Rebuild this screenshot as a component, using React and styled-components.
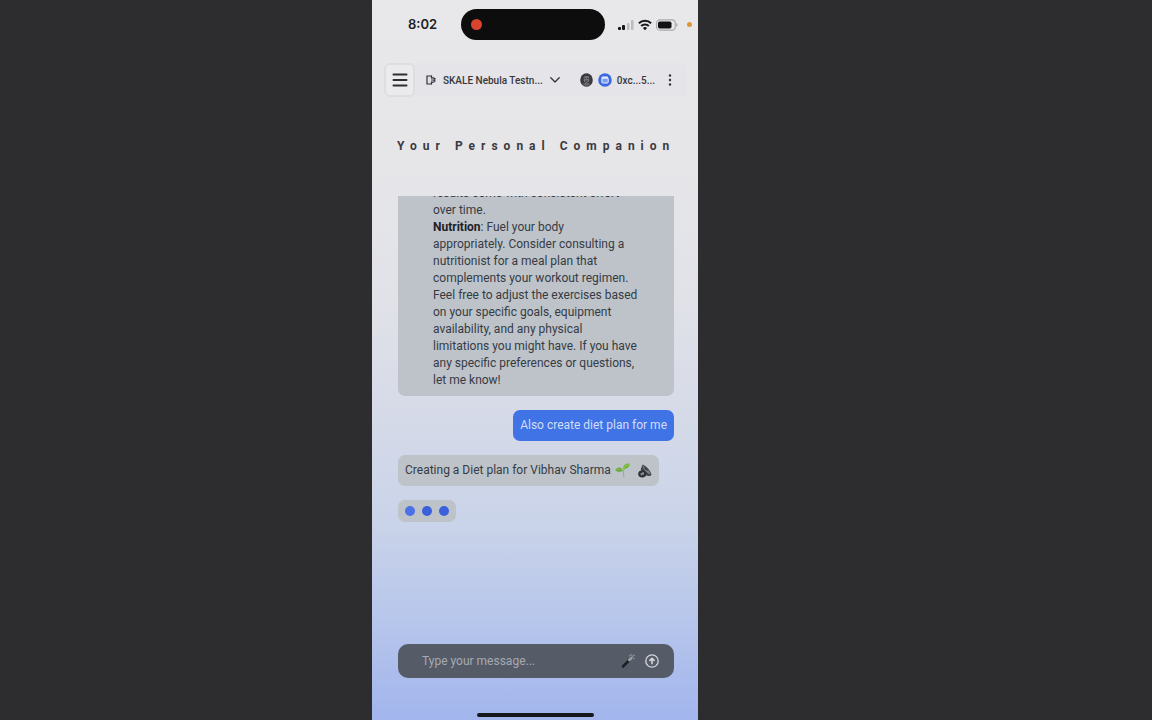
import React, {useState} from 'react';
import styled, {createGlobalStyle} from 'styled-components';

const GlobalStyle = createGlobalStyle`
  * { box-sizing:border-box; }
  body { margin:0; background:#2d2d2f; }
  button, input { font:inherit; color:inherit; border:0; background:none; padding:0; }
  button { cursor:pointer; }
`

const SignalIcon = () => (
    <svg width="16" height="12" viewBox="0 0 16 12">
        <rect x="0" y="8" width="3" height="3" rx="1" fill="#161618"/>
        <rect x="4" y="6" width="3" height="5" rx="1" fill="#161618"/>
        <rect x="9" y="4" width="2.5" height="7" rx="1" fill="#bcbcc0"/>
        <rect x="13" y="1" width="2.5" height="10" rx="1" fill="#bcbcc0"/>
    </svg>
);

const WifiIcon = () => (
    <svg width="14" height="12" viewBox="0 0 14 12" fill="none" stroke="#161618" strokeWidth="2">
        <path d="M.9 4.3a8.7 8.7 0 0 1 12.2 0"/>
        <path d="M3.2 7a5.4 5.4 0 0 1 7.6 0"/>
        <path d="M7 11.3 4.9 9.1a3 3 0 0 1 4.2 0z" fill="#161618" stroke="none"/>
    </svg>
);

const BatteryIcon = () => (
    <svg width="22" height="12" viewBox="0 0 22 12">
        <rect x=".6" y=".9" width="18.6" height="10.2" rx="3.2" fill="none" stroke="#a9a9ad" strokeWidth="1.1"/>
        <rect x="2" y="2.4" width="13.5" height="7.2" rx="1.8" fill="#111113"/>
        <path d="M20.2 4v4c1.8-.7 1.8-3.3 0-4z" fill="#a9a9ad"/>
    </svg>
);

const MenuIcon = () => (
    <svg width="16" height="14" viewBox="0 0 16 14" stroke="#2f2f33" strokeWidth="2" strokeLinecap="round">
        <path d="M1.5 1.5h13M1.5 7h13M1.5 12.5h13"/>
    </svg>
);

const SkaleIcon = () => (
    <svg width="10" height="10" viewBox="0 0 10 10" fill="none" stroke="#333338" strokeWidth="1.2">
        <path d="M5.5 1H1v8h4.5"/>
        <path d="M5.5.5v2.300M5.500 7.200v2.300"/>
        <path d="M4.800 2.900h2.700l1.500 1-1.500 1.100 1.500 1.100-1.500 1.100H4.800M5 5h2.500"/>
    </svg>
);

const ChevronIcon = () => (
    <svg width="10" height="6" viewBox="0 0 10 6" fill="none" stroke="#333338" strokeWidth="1.3" strokeLinecap="round" strokeLinejoin="round">
        <path d="M.8.8 5 5 9.2.8"/>
    </svg>
);

const AvatarIcon = () => (
    <svg width="13" height="14" viewBox="0 0 13 14">
        <ellipse cx="6.5" cy="7" rx="6.3" ry="6.8" fill="#3a3a3d"/>
        <path d="M3.8 4.5C4 2.500 9 2.500 9.2 4.500v3.300c-.2 2.600-5.200 2.600-5.400 0z" fill="#77777a"/>
        <path d="M4.500 5.400h1.400M7.100 5.400h1.400M5.200 8h2.600" stroke="#29292c" strokeWidth=".9"/>
        <path d="M2.500 11c2-1.500 6-1.500 8 0-2 2.300-6 2.300-8 0z" fill="#69696c"/>
    </svg>
);

const WalletIcon = () => (
    <svg width="14" height="14" viewBox="0 0 14 14">
        <circle cx="7" cy="7" r="6.8" fill="#3c69e0"/>
        <rect x="3.8" y="4.8" width="6.4" height="5.2" rx="1" fill="#7da0ee" stroke="#e9effc" strokeWidth="1"/>
        <path d="M3.800 5.500V4.300c0-.5.3-.8.8-.8h4.600c.5 0 .8.300.8.800v1.200z" fill="#e9effc"/>
    </svg>
);

const MoreIcon = () => (
    <svg width="4" height="12" viewBox="0 0 4 12" fill="#333338">
        <circle cx="2" cy="1.5" r="1.2"/>
        <circle cx="2" cy="6" r="1.2"/>
        <circle cx="2" cy="10.5" r="1.2"/>
    </svg>
);

const SeedlingIcon = () => (
    <svg width="15" height="15" viewBox="0 0 15 15">
        <path d="M8.8 14C8.9 11 8.400 8.500 7.400 6.500M8.400 8C9 6 10.500 4.500 12.500 3" fill="none" stroke="#8fae7b" strokeWidth="1"/>
        <path d="M7.800 6.900C5.500 9.800 2 9 .2 7.300 2 4.200 6 3.400 7.800 6.900z" fill="#68a832"/>
        <path d="M8.100 5.800C8 1.800 11 .4 14.800.6 14.700 4 12 6.500 8.100 5.800z" fill="#74b737"/>
        <path d="M1.500 6.900c2-.8 4-.9 5.700-.3M9 5c1-1.700 2.500-2.700 4.500-3.300" stroke="#96cd58" strokeWidth=".7" fill="none"/>
    </svg>
);

const SpeakerIcon = () => (
    <svg width="14" height="14" viewBox="0 0 14 14">
        <path d="M4.2.9C6.400.2 12.300 6 13.500 10.700c-1 1.500-3.500 1.400-5 .7L2.600 6z" fill="#3f4349"/>
        <path d="M4.400 1.200c2.700.8 6.800 5.200 8 9.300-2.800-.8-7.500-5.500-8-9.300z" fill="#858a90"/>
        <path d="M5.500 2c2 .6 4 3 4.600 5-1.500.1-4-2.500-4.600-5z" fill="#35393f"/>
        <ellipse cx="4.200" cy="10" rx="4" ry="3.400" fill="#2d3136"/>
        <path d="M2.200 9.700 5.600 7.800l.6 2.500-3 1.200z" fill="#8d9298"/>
    </svg>
);

const WandIcon = () => (
    <svg width="15" height="16" viewBox="0 0 15 16" fill="none" strokeLinecap="round">
        <path d="M2 13.5 8.500 7" stroke="#1e2024" strokeWidth="2.600"/>
        <path d="M8.300 7.200 10.300 5.200" stroke="#9ca0a7" strokeWidth="2.600"/>
        <path d="M8.500 3 10.500 1.700M12.300 2.200l.9.3M13 5l.1.800M11.300 3.700l.9-.9" stroke="#8f949c" strokeWidth="1.200"/>
    </svg>
);

const SendIcon = () => (
    <svg width="14" height="14" viewBox="0 0 14 14" fill="none" stroke="#d5d7da" strokeWidth="1.3" strokeLinecap="round" strokeLinejoin="round">
        <circle cx="7" cy="7" r="6.2"/>
        <path d="M7 9.800V4.500M4.900 6.400 7 4.300l2.100 2.100" strokeWidth="1.600"/>
    </svg>
);

const App = () => {
    const [message, setMessage] = useState('');

    return(
        <Page>
            <GlobalStyle/>
            <Phone>
                <StatusBar>
                    <Time>8:02</Time>
                    <Island><RecordDot/></Island>
                    <StatusIcons>
                        <SignalIcon/>
                        <WifiIcon/>
                        <BatteryIcon/>
                        <MicDot/>
                    </StatusIcons>
                </StatusBar>

                <Header>
                    <MenuButton aria-label="Menu"><MenuIcon/></MenuButton>
                    <WalletBar>
                        <NetworkButton>
                            <SkaleIcon/>
                            <span>SKALE Nebula Testn...</span>
                            <ChevronIcon/>
                        </NetworkButton>
                        <AccountButton>
                            <AvatarIcon/>
                            <WalletIcon/>
                            <span>0xc...5...</span>
                        </AccountButton>
                        <MoreButton aria-label="More"><MoreIcon/></MoreButton>
                    </WalletBar>
                </Header>

                <Title>Your Personal Companion</Title>

                <Chat>
                    <LongBubble>
                        results come with consistent effort<br/>
                        over time.<br/>
                        <b>Nutrition</b>: Fuel your body<br/>
                        appropriately. Consider consulting a<br/>
                        nutritionist for a meal plan that<br/>
                        complements your workout regimen.<br/>
                        Feel free to adjust the exercises based<br/>
                        on your specific goals, equipment<br/>
                        availability, and any physical<br/>
                        limitations you might have. If you have<br/>
                        any specific preferences or questions,<br/>
                        let me know!
                    </LongBubble>
                    <UserBubble>Also create diet plan for me</UserBubble>
                    <BotBubble>
                        <span>Creating a Diet plan for Vibhav Sharma</span>
                        <SeedlingIcon/>
                        <SpeakButton aria-label="Read aloud"><SpeakerIcon/></SpeakButton>
                    </BotBubble>
                    <Typing>
                        <Dot $color="#4a72e6"/>
                        <Dot $color="#3b60dc"/>
                        <Dot $color="#3b60dc"/>
                    </Typing>
                </Chat>

                <Composer onSubmit={e => e.preventDefault()}>
                    <MessageInput
                        aria-label="Message"
                        placeholder="Type your message..."
                        value={message}
                        onChange={e => setMessage(e.target.value)}
                    />
                    <IconButton type="button" aria-label="Suggest"><WandIcon/></IconButton>
                    <IconButton type="submit" aria-label="Send"><SendIcon/></IconButton>
                </Composer>
                <HomeBar/>
            </Phone>
        </Page>
    );
}

export default App;

const Page = styled.div`
  display:grid;
  grid-template-columns:372fr minmax(auto, 326px) 454fr;
  height:100vh;
  min-height:560px;
`

const Phone = styled.main`
  grid-column:2;
  display:flex;
  flex-direction:column;
  min-height:0;
  background:linear-gradient(180deg, #e8e8ea 0%, #e6e6e9 22%, #e1e2e8 42%, #d7dbe8 56%, #c9d3e9 73%, #b7c6eb 86%, #a2b5ed 100%);
  color:#353b43;
  font-family:Roboto, 'Liberation Sans', sans-serif;
  font-size:12px;
  line-height:17px;
`

const StatusBar = styled.div`
  display:grid;
  grid-template-columns:1fr 144px 1fr;
  align-items:center;
  padding:9px 4px 0 0;
`

const Time = styled.span`
  padding-left:36px;
  font-family:Inter, sans-serif;
  font-size:13px;
  font-weight:600;
  color:#1d1d1f;
`

const Island = styled.div`
  display:flex;
  align-items:center;
  height:31px;
  padding-left:10px;
  border-radius:16px;
  background:#0d0d0e;
`

const RecordDot = styled.span`
  width:11px;
  height:11px;
  border-radius:50%;
  background:#d9442f;
`

const StatusIcons = styled.div`
  display:flex;
  align-items:center;
  gap:4px;
  padding-left:13px;
`

const MicDot = styled.span`
  flex:none;
  width:5px;
  height:5px;
  margin-left:5px;
  border-radius:50%;
  background:#dd9835;
`

const Header = styled.header`
  display:flex;
  align-items:center;
  margin:23px 11px 0 12px;
  border-radius:8px;
  background:#e4e4e9;
  font-size:10px;
  font-weight:500;
  color:#38383d;
`

const MenuButton = styled.button`
  display:flex;
  align-items:center;
  justify-content:center;
  width:31px;
  height:34px;
  border:2px solid #dededf;
  border-radius:6px;
  background:#ebebed;
`

const WalletBar = styled.div`
  flex:1;
  display:flex;
  align-items:center;
  padding:0 15px 0 11px;
  white-space:nowrap;
`

const NetworkButton = styled.button`
  display:flex;
  align-items:center;
  gap:7px;
`

const AccountButton = styled.button`
  display:flex;
  align-items:center;
  gap:5px;
  margin-left:auto;
`

const MoreButton = styled.button`
  display:flex;
  margin-left:13px;
`

const Title = styled.h1`
  margin:41px 0 41px;
  padding-left:25px;
  font-size:12px;
  line-height:17px;
  font-weight:700;
  letter-spacing:6px;
  white-space:nowrap;
  color:#3a3a40;
`

const Chat = styled.section`
  flex:1;
  min-height:0;
  display:flex;
  flex-direction:column;
  justify-content:flex-end;
  align-items:flex-start;
  gap:14px;
  margin:0 24px 0 26px;
  padding-bottom:122px;
  overflow:hidden;
`

const Bubble = styled.div`
  flex:none;
  padding:7px;
  border-radius:7px;
  background:#bec3ca;
`

const LongBubble = styled(Bubble)`
  align-self:stretch;
  padding-left:35px;
  white-space:nowrap;

  b { color:#1d2127; }
`

const UserBubble = styled(Bubble)`
  align-self:flex-end;
  background:#3f73e6;
  color:#d3def8;
`

const BotBubble = styled(Bubble)`
  display:flex;
  align-items:center;
  gap:4px;
`

const SpeakButton = styled.button`
  display:flex;
  margin-left:4px;
`

const Typing = styled(Bubble)`
  display:flex;
  gap:7px;
  padding:6px 7px;
`

const Dot = styled.span`
  width:10px;
  height:10px;
  border-radius:50%;
  background:${props => props.$color};
`

const Composer = styled.form`
  display:flex;
  align-items:center;
  gap:9px;
  height:34px;
  margin:0 24px 35px 26px;
  padding:0 15px 0 24px;
  border-radius:10px;
  background:#555b67;
`

const MessageInput = styled.input`
  flex:1;
  min-width:0;
  color:#e3e5e8;
  outline:none;

  &::placeholder { color:#a6aab2; opacity:1; }
`

const IconButton = styled.button`
  display:flex;
`

const HomeBar = styled.div`
  flex:none;
  width:117px;
  height:4px;
  margin:0 auto 3px;
  border-radius:2px;
  background:#16171b;
`
